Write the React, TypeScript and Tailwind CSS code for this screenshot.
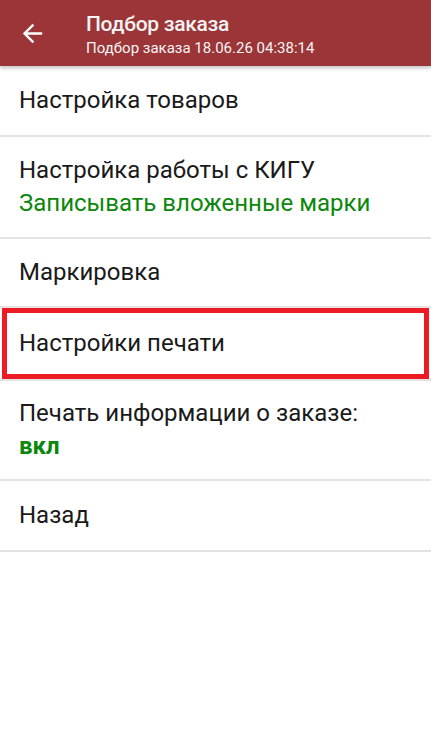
import React from 'react';

type Row = {
  title: string;
  value?: string;
  bold?: boolean;
  marked?: boolean;
  h: string;
};

const rows: Row[] = [
  { title: 'Настройка товаров', h: 'h-[69px]' },
  { title: 'Настройка работы с КИГУ', value: 'Записывать вложенные марки', h: 'h-[100px]' },
  { title: 'Маркировка', h: 'h-[67px]' },
  { title: 'Настройки печати', marked: true, h: 'h-[71px]' },
  { title: 'Печать информации о заказе:', value: 'вкл', bold: true, h: 'h-[98px]' },
  { title: 'Назад', h: 'h-[69px]' },
];

const ArrowBack = () => (
  <svg width="29" height="29" viewBox="0 0 24 24" fill="#ffffff">
    <path d="M20 11H7.83l5.59-5.59L12 4l-8 8 8 8 1.41-1.41L7.83 13H20v-2z" />
  </svg>
);

export default function App() {
  return (
    <div className="min-h-[739px] bg-white font-['Roboto',sans-serif]">
      {/* toolbar */}
      <div className="relative z-10 flex h-[66px] items-center bg-[#9b3537] shadow-[0_2px_4px_rgba(0,0,0,0.25)]">
        <div className="flex w-[86px] items-center pl-[18px]">
          <ArrowBack />
        </div>
        <div className="flex flex-col pt-[1px]">
          <div className="text-[21px] font-medium leading-[28px] tracking-[-0.3px] text-[#f4f4f4]">
            Подбор заказа
          </div>
          <div className="text-[15px] leading-[20px] text-[#f4f4f4]">Подбор заказа 18.06.26 04:38:14</div>
        </div>
      </div>

      {/* menu */}
      <div className="flex flex-col">
        {rows.map((row, i) => (
          <div key={i} className="relative border-b-2 border-[#e3e3e3]">
            <div className={`flex flex-col justify-center px-[19px] ${row.h}`}>
              <div className="text-[24px] leading-[33px] text-[#1a1a1a]">{row.title}</div>
              {row.value && (
                <div
                  className={`text-[24px] leading-[33px] text-[#0b870b] ${row.bold ? 'font-bold' : ''}`}
                >
                  {row.value}
                </div>
              )}
            </div>
            {row.marked && (
              <div className="pointer-events-none absolute inset-x-[2px] top-0 bottom-0 border-[5px] border-[#ed1c24]" />
            )}
          </div>
        ))}
      </div>
    </div>
  );
}
